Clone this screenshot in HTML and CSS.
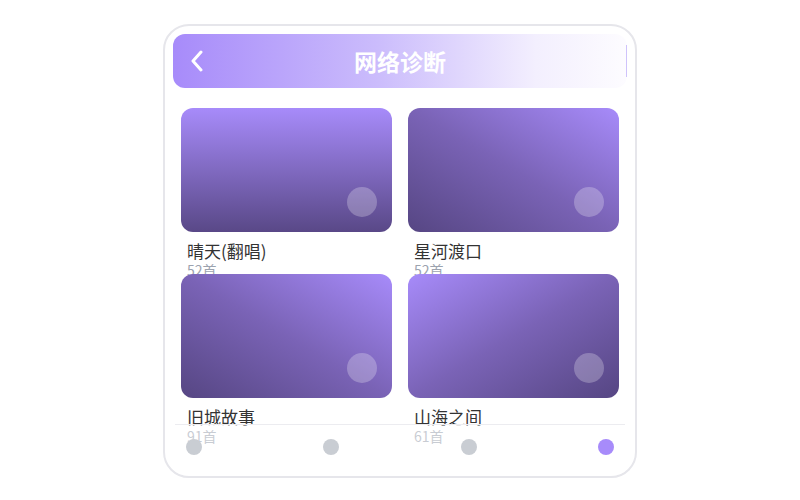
FILE: index.html
```html
<!DOCTYPE html>
<html lang="zh">
<head>
<meta charset="utf-8">
<link rel="stylesheet" href="styles.css">
</head>
<body>
<div class="phone">
  <header class="topbar">
    <div class="back">
      <svg width="14" height="22" viewBox="0 0 14 22"><path d="M11 2 L3 11 L11 20" fill="none" stroke="#fff" stroke-width="3" stroke-linecap="round" stroke-linejoin="round"/></svg>
    </div>
    <div class="title">网络诊断</div>
    <div class="side"><span class="rule"></span></div>
  </header>
  <main class="grid">
    <div class="item">
      <div class="cover c1"><span class="dot"></span></div>
      <div class="name">晴天(翻唱)</div>
      <div class="count">52首</div>
    </div>
    <div class="item">
      <div class="cover c2"><span class="dot"></span></div>
      <div class="name">星河渡口</div>
      <div class="count">52首</div>
    </div>
    <div class="item">
      <div class="cover c3"><span class="dot"></span></div>
      <div class="name">旧城故事</div>
      <div class="count">91首</div>
    </div>
    <div class="item">
      <div class="cover c4"><span class="dot"></span></div>
      <div class="name">山海之间</div>
      <div class="count">61首</div>
    </div>
  </main>
  <nav class="tabbar">
    <span class="tab"></span>
    <span class="tab"></span>
    <span class="tab"></span>
    <span class="tab active"></span>
  </nav>
</div>
</body>
</html>
```
FILE: styles.css
```css
* { box-sizing: border-box; }
html, body { margin: 0; padding: 0; background: #fff; }
body {
  font-family: "Noto Sans CJK SC", "Noto Sans", sans-serif;
  padding-top: 24px;
}
.phone {
  position: relative;
  width: 474px;
  height: 454px;
  margin: 0 auto;
  border: 2px solid #e6e6eb;
  border-radius: 26px;
  overflow: hidden;
  background: #fff;
  padding: 8px 8px 0 8px;
}
.topbar {
  height: 54px;
  border-radius: 12px;
  background: linear-gradient(90deg, #a78bfa 0%, #cbbcfc 45%, #f3effe 80%, #fdfcff 100%);
  display: grid;
  grid-template-columns: 50px 1fr 50px;
  align-items: center;
}
.back {
  display: flex;
  align-items: center;
  padding-left: 17px;
  height: 54px;
}
.back svg { display: block; }
.title {
  text-align: center;
  color: #fff;
  font-size: 23px;
  font-weight: 700;
  line-height: 54px;
}
.side {
  display: flex;
  justify-content: flex-end;
  align-items: center;
  height: 54px;
}
.rule {
  display: block;
  width: 1px;
  height: 32px;
  background: #cfc3fb;
}
.grid {
  display: grid;
  grid-template-columns: 1fr 1fr;
  grid-template-rows: 154px 154px;
  column-gap: 16px;
  row-gap: 12px;
  padding: 20px 8px 0 8px;
}
.item { height: 154px; }
.cover {
  position: relative;
  height: 124px;
  border-radius: 12px;
}
.c1 { background: linear-gradient(180deg, #a78bfa 0%, #594887 100%); }
.c2 { background: linear-gradient(to bottom left, #a78bfa 0%, #7a63b6 50%, #564683 100%); }
.c3 { background: linear-gradient(to bottom left, #a78bfa 0%, #7a63b6 50%, #564683 100%); }
.c4 { background: linear-gradient(to bottom right, #a78bfa 0%, #7a63b6 50%, #564683 100%); }
.dot {
  position: absolute;
  right: 15px;
  bottom: 15px;
  width: 30px;
  height: 30px;
  border-radius: 50%;
  background: rgba(255, 255, 255, 0.25);
}
.name {
  margin-top: 8px;
  padding-left: 6px;
  font-size: 17px;
  line-height: 22px;
  color: #333;
}
.count {
  padding-left: 6px;
  font-size: 14px;
  line-height: 17px;
  color: #9ca3af;
}
.tabbar {
  position: absolute;
  left: 10px;
  right: 10px;
  top: 398px;
  height: 52px;
  border-top: 1px solid #ececf0;
  background: rgba(255, 255, 255, 0.45);
  display: flex;
  justify-content: space-between;
  padding: 14px 11px 0 11px;
}
.tab {
  width: 16px;
  height: 16px;
  border-radius: 50%;
  background: #c9cdd3;
}
.tab.active { background: #a78bfa; }
```
